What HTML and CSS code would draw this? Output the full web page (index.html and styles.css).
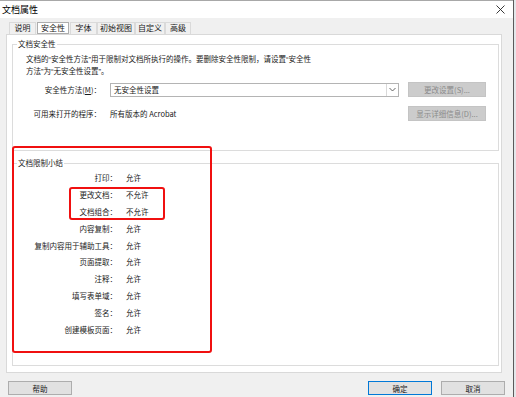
FILE: index.html
```html
<!DOCTYPE html>
<html lang="zh-CN">
<head>
    <meta charset="UTF-8">
    <title>文档属性</title>
    <link rel="stylesheet" href="styles.css">
</head>
<body>
    <div class="screen">
        <div class="dialog">
            <div class="titlebar">
                <span class="title">文档属性</span>
                <svg class="close" width="9" height="9" viewBox="0 0 9 9">
                    <path d="M0.5 0.5 L8.5 8.5 M8.5 0.5 L0.5 8.5" stroke="#222" stroke-width="0.9" fill="none"/>
                </svg>
            </div>

            <div class="tabs">
                <span class="tab">说明</span>
                <span class="tab active">安全性</span>
                <span class="tab">字体</span>
                <span class="tab">初始视图</span>
                <span class="tab">自定义</span>
                <span class="tab">高级</span>
            </div>

            <div class="panel">
                <fieldset class="group group-security">
                    <legend>文档安全性</legend>
                    <p class="intro">文档的<q>“</q>安全性方法<q>”</q>用于限制对文档所执行的操作。要删除安全性限制，请设置<q>“</q>安全性<br>方法<q>”</q>为<q>“</q>无安全性设置<q>”</q>。</p>
                    <div class="row row-method">
                        <label class="row-label">安全性方法(<u>M</u>)：</label>
                        <div class="select">
                            <span class="select-value">无安全性设置</span>
                            <span class="select-arrow">
                                <svg width="7" height="5" viewBox="0 0 7 5"><path d="M0.5 1 L3.5 4 L6.5 1" stroke="#555" stroke-width="0.9" fill="none"/></svg>
                            </span>
                        </div>
                        <button class="btn disabled">更改设置(S)...</button>
                    </div>
                    <div class="row row-open">
                        <label class="row-label">可用来打开的程序：</label>
                        <span class="row-value">所有版本的 Acrobat</span>
                        <button class="btn disabled">显示详细信息(D)...</button>
                    </div>
                </fieldset>

                <fieldset class="group group-summary">
                    <legend>文档限制小结</legend>
                    <div class="summary">
                        <span class="sum-label">打印：</span><span class="sum-value">允许</span>
                        <span class="sum-label">更改文档：</span><span class="sum-value">不允许</span>
                        <span class="sum-label">文档组合：</span><span class="sum-value">不允许</span>
                        <span class="sum-label">内容复制：</span><span class="sum-value">允许</span>
                        <span class="sum-label">复制内容用于辅助工具：</span><span class="sum-value">允许</span>
                        <span class="sum-label">页面提取：</span><span class="sum-value">允许</span>
                        <span class="sum-label">注释：</span><span class="sum-value">允许</span>
                        <span class="sum-label">填写表单域：</span><span class="sum-value">允许</span>
                        <span class="sum-label">签名：</span><span class="sum-value">允许</span>
                        <span class="sum-label">创建模板页面：</span><span class="sum-value">允许</span>
                    </div>
                </fieldset>
            </div>

            <div class="footer">
                <button class="btn btn-help">帮助</button>
                <div class="footer-right">
                    <button class="btn btn-ok">确定</button>
                    <button class="btn">取消</button>
                </div>
            </div>

            <!-- red annotation marks -->
            <div class="mark mark-big"></div>
            <div class="mark mark-small"></div>
        </div>
        <div class="behind"></div>
    </div>
</body>
</html>
```

FILE: styles.css
```css
* {
    margin: 0;
    padding: 0;
    box-sizing: border-box;
}

body {
    font-family: "Noto Sans CJK SC", "Noto Sans", sans-serif;
    font-size: 7.5px;
    color: #1a1a1a;
    background: #f0f0f0;
    width: 516px;
    height: 397px;
    overflow: hidden;
}

.screen {
    display: flex;
    height: 397px;
}

.dialog {
    position: relative;
    width: 513px;
    height: 397px;
    background: #f0f0f0;
    border-top: 1px solid #a8a8a8;
}

.behind {
    flex: 1;
    background: #e4e7ea;
    border-left: 1px solid #5a5a5a;
}

/* title bar */
.titlebar {
    height: 17px;
    background: #fff;
    display: flex;
    align-items: center;
    justify-content: space-between;
    padding: 0 8px 0 2px;
}

.title {
    font-size: 9px;
    line-height: 12px;
    color: #000;
}

/* tabs */
.tabs {
    display: flex;
    height: 12px;
    margin-top: 4px;
    padding-left: 9px;
}

.tab {
    font-size: 8px;
    line-height: 10px;
    text-align: center;
    border: 1px solid #dadada;
    border-bottom: none;
    background: #f0f0f0;
}

.tab:nth-child(1) { width: 27px; }
.tab:nth-child(2) { width: 32px; margin-left: 1px; }
.tab:nth-child(3) { width: 27px; margin-left: 1px; }
.tab:nth-child(4) { width: 38px; }
.tab:nth-child(5) { width: 30px; }
.tab:nth-child(6) { width: 26px; }

.tab.active {
    background: #fff;
    border-color: #adadad;
    border-bottom: 1px solid #adadad;
}

/* panel */
.panel {
    width: 496px;
    height: 339px;
    margin-left: 6px;
    background: #fff;
    border: 1px solid #d9d9d9;
    padding: 3px 2px 0 5px;
}

.group {
    border: 1px solid #dcdcdc;
    min-width: 0;
}

.group legend {
    margin-left: 4px;
    padding: 0 1px;
    line-height: 12px;
}

.group-security {
    height: 113px;
}

.intro {
    margin: 3px 0 0 13px;
    line-height: 11px;
    white-space: nowrap;
}

.intro q {
    quotes: none;
    font-family: "Liberation Sans", sans-serif;
}

.row {
    display: flex;
    align-items: center;
    height: 15px;
}

.row-method {
    margin-top: 5px;
}

.row-open {
    margin-top: 9px;
}

.row-label {
    width: 88px;
    text-align: right;
    margin-right: 9px;
}

.select {
    width: 289px;
    height: 14px;
    border: 1px solid #b4b4b4;
    display: flex;
    align-items: center;
    margin-right: 9px;
}

.select-value {
    flex: 1;
    padding-left: 3px;
}

.select-arrow {
    width: 12px;
    height: 12px;
    border-left: 1px solid #d9d9d9;
    display: flex;
    align-items: center;
    justify-content: center;
}

.row-value {
    width: 298px;
}

.btn {
    font-family: inherit;
    font-size: 7.5px;
    width: 78px;
    height: 15px;
    background: #e1e1e1;
    border: 1px solid #adadad;
    color: #1a1a1a;
}

.btn.disabled {
    background: #cccccc;
    border-color: #c4c4c4;
    color: #8a8a8a;
}

.group-summary {
    margin-top: 6px;
    height: 209px;
}

.summary {
    display: grid;
    grid-template-columns: 104px auto;
    grid-auto-rows: 16.8px;
    column-gap: 9px;
    align-items: center;
    margin-top: 0.6px;
}

.sum-label {
    text-align: right;
}

/* footer */
.footer {
    display: flex;
    justify-content: space-between;
    margin-top: 8px;
    padding: 0 8px;
}

.footer .btn {
    width: 64px;
    height: 14px;
}

.footer-right {
    display: flex;
    gap: 9px;
}

.btn-ok {
    border-color: #0078d7;
}

/* red annotation boxes */
.mark {
    position: absolute;
    border: 2px solid #f01010;
    border-radius: 3px;
}

.mark-big {
    left: 12px;
    top: 145px;
    width: 200px;
    height: 207px;
}

.mark-small {
    left: 69px;
    top: 186px;
    width: 96px;
    height: 33px;
}
```
